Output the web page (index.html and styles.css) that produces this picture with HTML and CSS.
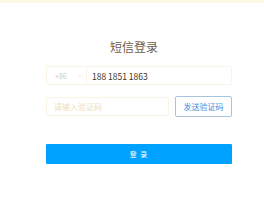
FILE: index.html
```html
<!DOCTYPE html>
<html lang="zh">
<head>
<meta charset="utf-8">
<link rel="stylesheet" href="styles.css">
</head>
<body>
<div class="topbar"></div>
<h1 class="title">短信登录</h1>
<div class="panel">
  <div class="field phone">
    <span class="prefix">+86</span>
    <svg class="chev" width="6" height="4" viewBox="0 0 6 4"><path d="M0.5 0.5 L3 3 L5.5 0.5" fill="none" stroke="#e6e6e6" stroke-width="0.8"/></svg>
    <span class="sep"></span>
    <span class="number">188 1851 1863</span>
  </div>
  <div class="row">
    <div class="field code"><span class="placeholder">请输入验证码</span></div>
    <button class="send">发送验证码</button>
  </div>
  <button class="login">登 录</button>
</div>
</body>
</html>
```
FILE: styles.css
```css
html, body { margin: 0; padding: 0; background: #fff; }
body { font-family: "Noto Sans CJK SC", "Noto Sans", sans-serif; width: 264px; height: 200px; overflow: hidden; }
.topbar { height: 3px; background: #fdf7e6; }
.title { margin: 36px 0 0; padding-left: 4px; font-size: 12px; line-height: 16px; font-weight: normal; color: #6b604c; text-align: center; }
.panel { width: 186px; margin-left: 46px; display: flex; flex-direction: column; }
.field { box-sizing: border-box; height: 19px; border: 1px solid #fcf4e2; border-radius: 2px; display: flex; align-items: center; }
.phone { margin-top: 11px; padding-left: 8px; }
.prefix { font-size: 7px; color: #c8c8c8; width: 14px; }
.chev { margin-left: 8px; }
.sep { width: 1px; height: 17px; background: #faf3e3; margin-left: 3px; }
.number { font-size: 8.5px; color: #3a3428; margin-left: 5px; }
.row { display: flex; margin-top: 11px; gap: 6px; align-items: center; }
.code { width: 123px; padding-left: 7px; }
.placeholder { font-size: 8px; color: #f0e0be; }
.send { box-sizing: border-box; width: 57px; height: 21px; border: 1px solid #aac3dc; border-radius: 2px; background: #fff; color: #3c8fe0; font-family: inherit; font-size: 8px; padding: 0; }
.login { margin-top: 27px; height: 20px; border: none; border-radius: 1px; background: #00a2ff; color: #fff; font-family: inherit; font-size: 7px; letter-spacing: 1px; padding: 0; }
```
